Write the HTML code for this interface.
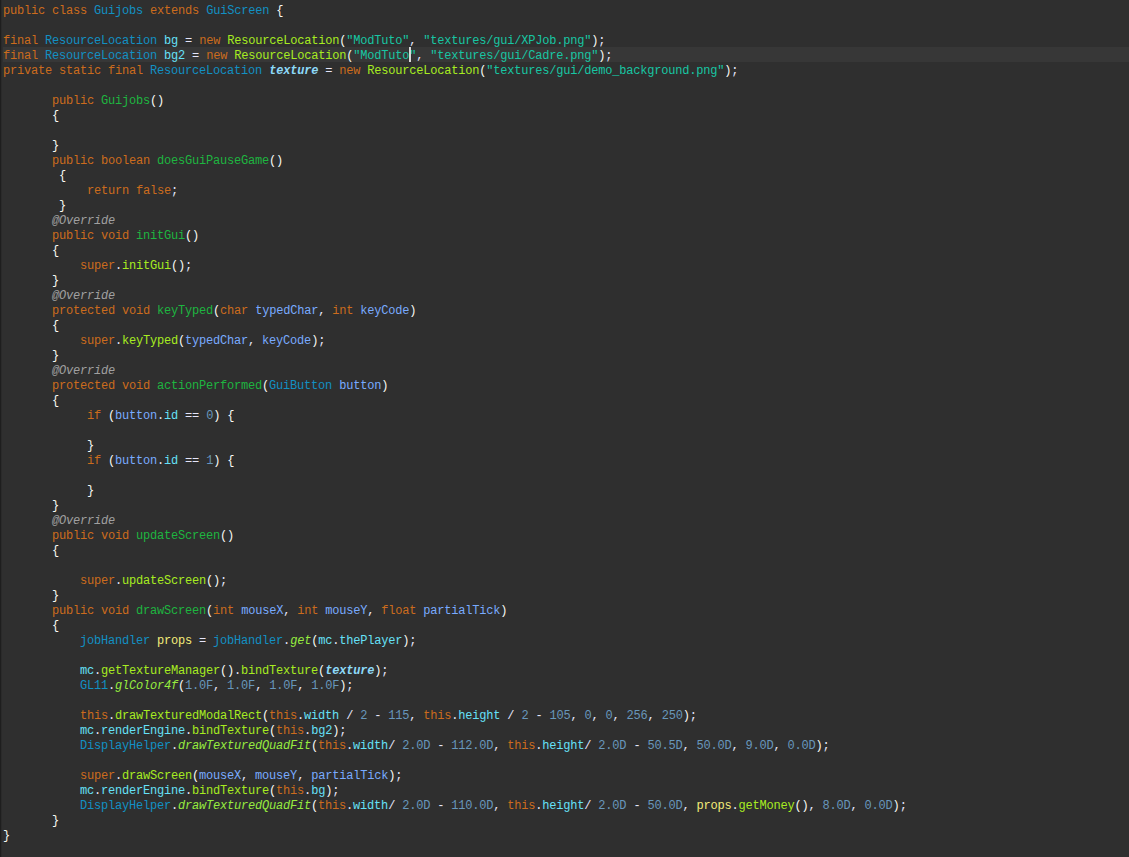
<!DOCTYPE html>
<html><head><meta charset="utf-8"><style>
html,body{margin:0;padding:0;}
body{width:1129px;height:857px;overflow:hidden;position:relative;background:#2F2F2F;}
#gut{position:absolute;left:0;top:0;width:1px;height:857px;background:#1E1E1E;}
#gut2{position:absolute;left:1px;top:0;width:2px;height:857px;background:#2A2A2A;}
#hl{position:absolute;left:3px;right:0;top:47px;height:15px;background:#373737;}
.l{position:absolute;white-space:pre;height:15px;line-height:15px;font-family:"Liberation Mono",monospace;font-size:12px;letter-spacing:-0.2px;color:#D9E8F7;}
.k{color:#CC6C1D}.c{color:#1290C3}.md{color:#1EB540}.mi{color:#A7EC21}.s{color:#17C6A3}.n{color:#6897BB}
.a{color:#A0A0A0;font-style:italic}.f{color:#66E1F8}.sf{color:#8DDAF8;font-style:italic;font-weight:bold}
.smi{color:#96EC3F;font-style:italic}.lv{color:#F3EC79}.pv{color:#79ABFF}.o{color:#E6E6FA}.b{color:#F9FAF4}
.cur{display:none}
#cur{position:absolute;left:409px;top:47px;width:2px;height:15px;background:#DEDEDE;box-shadow:0 0 1px #1a1a1a;}
#gut2{width:1px} #cur{background:#D8D8D8}
</style></head><body><div id="gut"></div><div id="gut2"></div><div id="hl"></div>
<div class="l" style="top:4px;left:3.00px"><span class="k">public</span> <span class="k">class</span> <span class="c">Guijobs</span> <span class="k">extends</span> <span class="c">GuiScreen</span> <span class="b">{</span></div>
<div class="l" style="top:34px;left:3.00px"><span class="k">final</span> <span class="c">ResourceLocation</span> <span class="f">bg</span> <span class="o">=</span> <span class="k">new</span> <span class="mi">ResourceLocation</span><span class="b">(</span><span class="s">&quot;ModTuto&quot;</span><span class="o">,</span> <span class="s">&quot;textures/gui/XPJob.png&quot;</span><span class="b">)</span><span class="o">;</span></div>
<div class="l" style="top:49px;left:3.00px"><span class="k">final</span> <span class="c">ResourceLocation</span> <span class="f">bg2</span> <span class="o">=</span> <span class="k">new</span> <span class="mi">ResourceLocation</span><span class="b">(</span><span class="s">&quot;ModTuto</span><i class="cur"></i><span class="s">&quot;</span><span class="o">,</span> <span class="s">&quot;textures/gui/Cadre.png&quot;</span><span class="b">)</span><span class="o">;</span></div>
<div class="l" style="top:64px;left:3.00px"><span class="k">private</span> <span class="k">static</span> <span class="k">final</span> <span class="c">ResourceLocation</span> <span class="sf">texture</span> <span class="o">=</span> <span class="k">new</span> <span class="mi">ResourceLocation</span><span class="b">(</span><span class="s">&quot;textures/gui/demo_background.png&quot;</span><span class="b">)</span><span class="o">;</span></div>
<div class="l" style="top:94px;left:52.00px"><span class="k">public</span> <span class="md">Guijobs</span><span class="b">()</span></div>
<div class="l" style="top:109px;left:52.00px"><span class="b">{</span></div>
<div class="l" style="top:139px;left:52.00px"><span class="b">}</span></div>
<div class="l" style="top:154px;left:52.00px"><span class="k">public</span> <span class="k">boolean</span> <span class="md">doesGuiPauseGame</span><span class="b">()</span></div>
<div class="l" style="top:169px;left:59.00px"><span class="b">{</span></div>
<div class="l" style="top:184px;left:87.00px"><span class="k">return</span> <span class="k">false</span><span class="o">;</span></div>
<div class="l" style="top:199px;left:59.00px"><span class="b">}</span></div>
<div class="l" style="top:214px;left:52.00px"><span class="a">@Override</span></div>
<div class="l" style="top:229px;left:52.00px"><span class="k">public</span> <span class="k">void</span> <span class="md">initGui</span><span class="b">()</span></div>
<div class="l" style="top:244px;left:52.00px"><span class="b">{</span></div>
<div class="l" style="top:259px;left:80.00px"><span class="k">super</span><span class="o">.</span><span class="mi">initGui</span><span class="b">()</span><span class="o">;</span></div>
<div class="l" style="top:274px;left:52.00px"><span class="b">}</span></div>
<div class="l" style="top:289px;left:52.00px"><span class="a">@Override</span></div>
<div class="l" style="top:304px;left:52.00px"><span class="k">protected</span> <span class="k">void</span> <span class="md">keyTyped</span><span class="b">(</span><span class="k">char</span> <span class="pv">typedChar</span><span class="o">,</span> <span class="k">int</span> <span class="pv">keyCode</span><span class="b">)</span></div>
<div class="l" style="top:319px;left:52.00px"><span class="b">{</span></div>
<div class="l" style="top:334px;left:80.00px"><span class="k">super</span><span class="o">.</span><span class="mi">keyTyped</span><span class="b">(</span><span class="pv">typedChar</span><span class="o">,</span> <span class="pv">keyCode</span><span class="b">)</span><span class="o">;</span></div>
<div class="l" style="top:349px;left:52.00px"><span class="b">}</span></div>
<div class="l" style="top:364px;left:52.00px"><span class="a">@Override</span></div>
<div class="l" style="top:379px;left:52.00px"><span class="k">protected</span> <span class="k">void</span> <span class="md">actionPerformed</span><span class="b">(</span><span class="c">GuiButton</span> <span class="pv">button</span><span class="b">)</span></div>
<div class="l" style="top:394px;left:52.00px"><span class="b">{</span></div>
<div class="l" style="top:409px;left:87.00px"><span class="k">if</span> <span class="b">(</span><span class="pv">button</span><span class="o">.</span><span class="f">id</span> <span class="o">==</span> <span class="n">0</span><span class="b">)</span> <span class="b">{</span></div>
<div class="l" style="top:439px;left:87.00px"><span class="b">}</span></div>
<div class="l" style="top:454px;left:87.00px"><span class="k">if</span> <span class="b">(</span><span class="pv">button</span><span class="o">.</span><span class="f">id</span> <span class="o">==</span> <span class="n">1</span><span class="b">)</span> <span class="b">{</span></div>
<div class="l" style="top:484px;left:87.00px"><span class="b">}</span></div>
<div class="l" style="top:499px;left:52.00px"><span class="b">}</span></div>
<div class="l" style="top:514px;left:52.00px"><span class="a">@Override</span></div>
<div class="l" style="top:529px;left:52.00px"><span class="k">public</span> <span class="k">void</span> <span class="md">updateScreen</span><span class="b">()</span></div>
<div class="l" style="top:544px;left:52.00px"><span class="b">{</span></div>
<div class="l" style="top:574px;left:80.00px"><span class="k">super</span><span class="o">.</span><span class="mi">updateScreen</span><span class="b">()</span><span class="o">;</span></div>
<div class="l" style="top:589px;left:52.00px"><span class="b">}</span></div>
<div class="l" style="top:604px;left:52.00px"><span class="k">public</span> <span class="k">void</span> <span class="md">drawScreen</span><span class="b">(</span><span class="k">int</span> <span class="pv">mouseX</span><span class="o">,</span> <span class="k">int</span> <span class="pv">mouseY</span><span class="o">,</span> <span class="k">float</span> <span class="pv">partialTick</span><span class="b">)</span></div>
<div class="l" style="top:619px;left:52.00px"><span class="b">{</span></div>
<div class="l" style="top:634px;left:80.00px"><span class="c">jobHandler</span> <span class="lv">props</span> <span class="o">=</span> <span class="c">jobHandler</span><span class="o">.</span><span class="smi">get</span><span class="b">(</span><span class="f">mc</span><span class="o">.</span><span class="f">thePlayer</span><span class="b">)</span><span class="o">;</span></div>
<div class="l" style="top:664px;left:80.00px"><span class="f">mc</span><span class="o">.</span><span class="mi">getTextureManager</span><span class="b">()</span><span class="o">.</span><span class="mi">bindTexture</span><span class="b">(</span><span class="sf">texture</span><span class="b">)</span><span class="o">;</span></div>
<div class="l" style="top:679px;left:80.00px"><span class="c">GL11</span><span class="o">.</span><span class="smi">glColor4f</span><span class="b">(</span><span class="n">1.0F</span><span class="o">,</span> <span class="n">1.0F</span><span class="o">,</span> <span class="n">1.0F</span><span class="o">,</span> <span class="n">1.0F</span><span class="b">)</span><span class="o">;</span></div>
<div class="l" style="top:709px;left:80.00px"><span class="k">this</span><span class="o">.</span><span class="mi">drawTexturedModalRect</span><span class="b">(</span><span class="k">this</span><span class="o">.</span><span class="f">width</span> <span class="o">/</span> <span class="n">2</span> <span class="o">-</span> <span class="n">115</span><span class="o">,</span> <span class="k">this</span><span class="o">.</span><span class="f">height</span> <span class="o">/</span> <span class="n">2</span> <span class="o">-</span> <span class="n">105</span><span class="o">,</span> <span class="n">0</span><span class="o">,</span> <span class="n">0</span><span class="o">,</span> <span class="n">256</span><span class="o">,</span> <span class="n">250</span><span class="b">)</span><span class="o">;</span></div>
<div class="l" style="top:724px;left:80.00px"><span class="f">mc</span><span class="o">.</span><span class="f">renderEngine</span><span class="o">.</span><span class="mi">bindTexture</span><span class="b">(</span><span class="k">this</span><span class="o">.</span><span class="f">bg2</span><span class="b">)</span><span class="o">;</span></div>
<div class="l" style="top:739px;left:80.00px"><span class="c">DisplayHelper</span><span class="o">.</span><span class="smi">drawTexturedQuadFit</span><span class="b">(</span><span class="k">this</span><span class="o">.</span><span class="f">width</span><span class="o">/</span> <span class="n">2.0D</span> <span class="o">-</span> <span class="n">112.0D</span><span class="o">,</span> <span class="k">this</span><span class="o">.</span><span class="f">height</span><span class="o">/</span> <span class="n">2.0D</span> <span class="o">-</span> <span class="n">50.5D</span><span class="o">,</span> <span class="n">50.0D</span><span class="o">,</span> <span class="n">9.0D</span><span class="o">,</span> <span class="n">0.0D</span><span class="b">)</span><span class="o">;</span></div>
<div class="l" style="top:769px;left:80.00px"><span class="k">super</span><span class="o">.</span><span class="mi">drawScreen</span><span class="b">(</span><span class="pv">mouseX</span><span class="o">,</span> <span class="pv">mouseY</span><span class="o">,</span> <span class="pv">partialTick</span><span class="b">)</span><span class="o">;</span></div>
<div class="l" style="top:784px;left:80.00px"><span class="f">mc</span><span class="o">.</span><span class="f">renderEngine</span><span class="o">.</span><span class="mi">bindTexture</span><span class="b">(</span><span class="k">this</span><span class="o">.</span><span class="f">bg</span><span class="b">)</span><span class="o">;</span></div>
<div class="l" style="top:799px;left:80.00px"><span class="c">DisplayHelper</span><span class="o">.</span><span class="smi">drawTexturedQuadFit</span><span class="b">(</span><span class="k">this</span><span class="o">.</span><span class="f">width</span><span class="o">/</span> <span class="n">2.0D</span> <span class="o">-</span> <span class="n">110.0D</span><span class="o">,</span> <span class="k">this</span><span class="o">.</span><span class="f">height</span><span class="o">/</span> <span class="n">2.0D</span> <span class="o">-</span> <span class="n">50.0D</span><span class="o">,</span> <span class="lv">props</span><span class="o">.</span><span class="mi">getMoney</span><span class="b">()</span><span class="o">,</span> <span class="n">8.0D</span><span class="o">,</span> <span class="n">0.0D</span><span class="b">)</span><span class="o">;</span></div>
<div class="l" style="top:814px;left:52.00px"><span class="b">}</span></div>
<div class="l" style="top:829px;left:3.00px"><span class="b">}</span></div>
<div id="cur"></div>
</body></html>
